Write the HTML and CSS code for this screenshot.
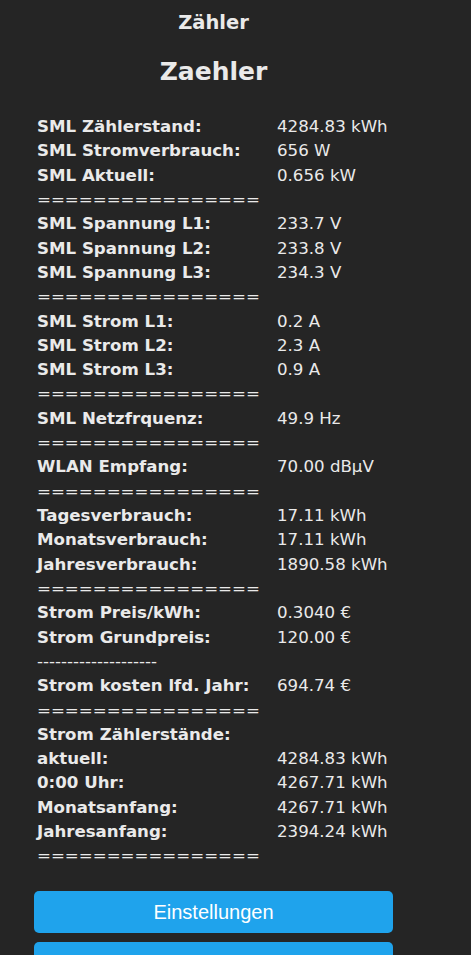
FILE: index.html
```html
<!DOCTYPE html>
<html lang="de">
<head>
	<meta charset="UTF-8">
	<title>Zaehler - Main Menu</title>
	<link rel="stylesheet" href="styles.css">
</head>
<body>
	<div class="page">
		<div class="box">
			<div class="head">
				<h3>Zähler</h3>
				<h2>Zaehler</h2>
			</div>
			<table class="sml">
				<tr><th>SML Zählerstand:</th><td>4284.83 kWh</td></tr>
				<tr><th>SML Stromverbrauch:</th><td>656 W</td></tr>
				<tr><th>SML Aktuell:</th><td>0.656 kW</td></tr>
				<tr><td class="sep">================</td><td></td></tr>
				<tr><th>SML Spannung L1:</th><td>233.7 V</td></tr>
				<tr><th>SML Spannung L2:</th><td>233.8 V</td></tr>
				<tr><th>SML Spannung L3:</th><td>234.3 V</td></tr>
				<tr><td class="sep">================</td><td></td></tr>
				<tr><th>SML Strom L1:</th><td>0.2 A</td></tr>
				<tr><th>SML Strom L2:</th><td>2.3 A</td></tr>
				<tr><th>SML Strom L3:</th><td>0.9 A</td></tr>
				<tr><td class="sep">================</td><td></td></tr>
				<tr><th>SML Netzfrquenz:</th><td>49.9 Hz</td></tr>
				<tr><td class="sep">================</td><td></td></tr>
				<tr><th>WLAN Empfang:</th><td>70.00 dBµV</td></tr>
				<tr><td class="sep">================</td><td></td></tr>
				<tr><th>Tagesverbrauch:</th><td>17.11 kWh</td></tr>
				<tr><th>Monatsverbrauch:</th><td>17.11 kWh</td></tr>
				<tr><th>Jahresverbrauch:</th><td>1890.58 kWh</td></tr>
				<tr><td class="sep">================</td><td></td></tr>
				<tr><th>Strom Preis/kWh:</th><td>0.3040 €</td></tr>
				<tr><th>Strom Grundpreis:</th><td>120.00 €</td></tr>
				<tr><td class="sep">--------------------</td><td></td></tr>
				<tr><th>Strom kosten lfd. Jahr:</th><td>694.74 €</td></tr>
				<tr><td class="sep">================</td><td></td></tr>
				<tr><th>Strom Zählerstände:</th><td></td></tr>
				<tr><th>aktuell:</th><td>4284.83 kWh</td></tr>
				<tr><th>0:00 Uhr:</th><td>4267.71 kWh</td></tr>
				<tr><th>Monatsanfang:</th><td>4267.71 kWh</td></tr>
				<tr><th>Jahresanfang:</th><td>2394.24 kWh</td></tr>
				<tr><td class="sep">================</td><td></td></tr>
			</table>
			<form action="cn" method="get"><button>Einstellungen</button></form>
			<form action="in" method="get"><button>Informationen</button></form>
		</div>
	</div>
</body>
</html>
```

FILE: styles.css
```css
*{
	margin: 0;
	padding: 0;
}
body{
	background: #252525;
	color: #eaeaea;
	font-family: "DejaVu Sans", Verdana, sans-serif;
	font-size: 16.64px;
}
.page{
	width: 427px;
	text-align: center;
}
.box{
	display: inline-block;
	width: 359px;
	text-align: left;
}
.head{
	text-align: center;
}
.head h3{
	margin-top: 11px;
	font-size: 19.5px;
	line-height: 23px;
}
.head h2{
	margin-top: 23px;
	font-size: 25px;
	line-height: 29px;
}
.sml{
	margin-top: 29px;
	border-spacing: 0;
	width: 100%;
}
.sml th,.sml td{
	line-height: 24.31px;
	text-align: left;
	white-space: nowrap;
	vertical-align: middle;
}
.sml th,.sml td.sep{
	width: 240px;
	padding-left: 3px;
}
.sml th{
	font-weight: bold;
}
.sml td.sep{
	font-weight: normal;
}
button{
	display: block;
	width: 100%;
	height: 42px;
	line-height: 42px;
	border: 0;
	border-radius: 5px;
	background: #1fa3ec;
	color: #fff;
	font-family: "Liberation Sans", Arial, sans-serif;
	font-size: 20px;
	cursor: pointer;
}
form:first-of-type button{
	margin-top: 22px;
}
form + form button{
	margin-top: 9px;
}
```
